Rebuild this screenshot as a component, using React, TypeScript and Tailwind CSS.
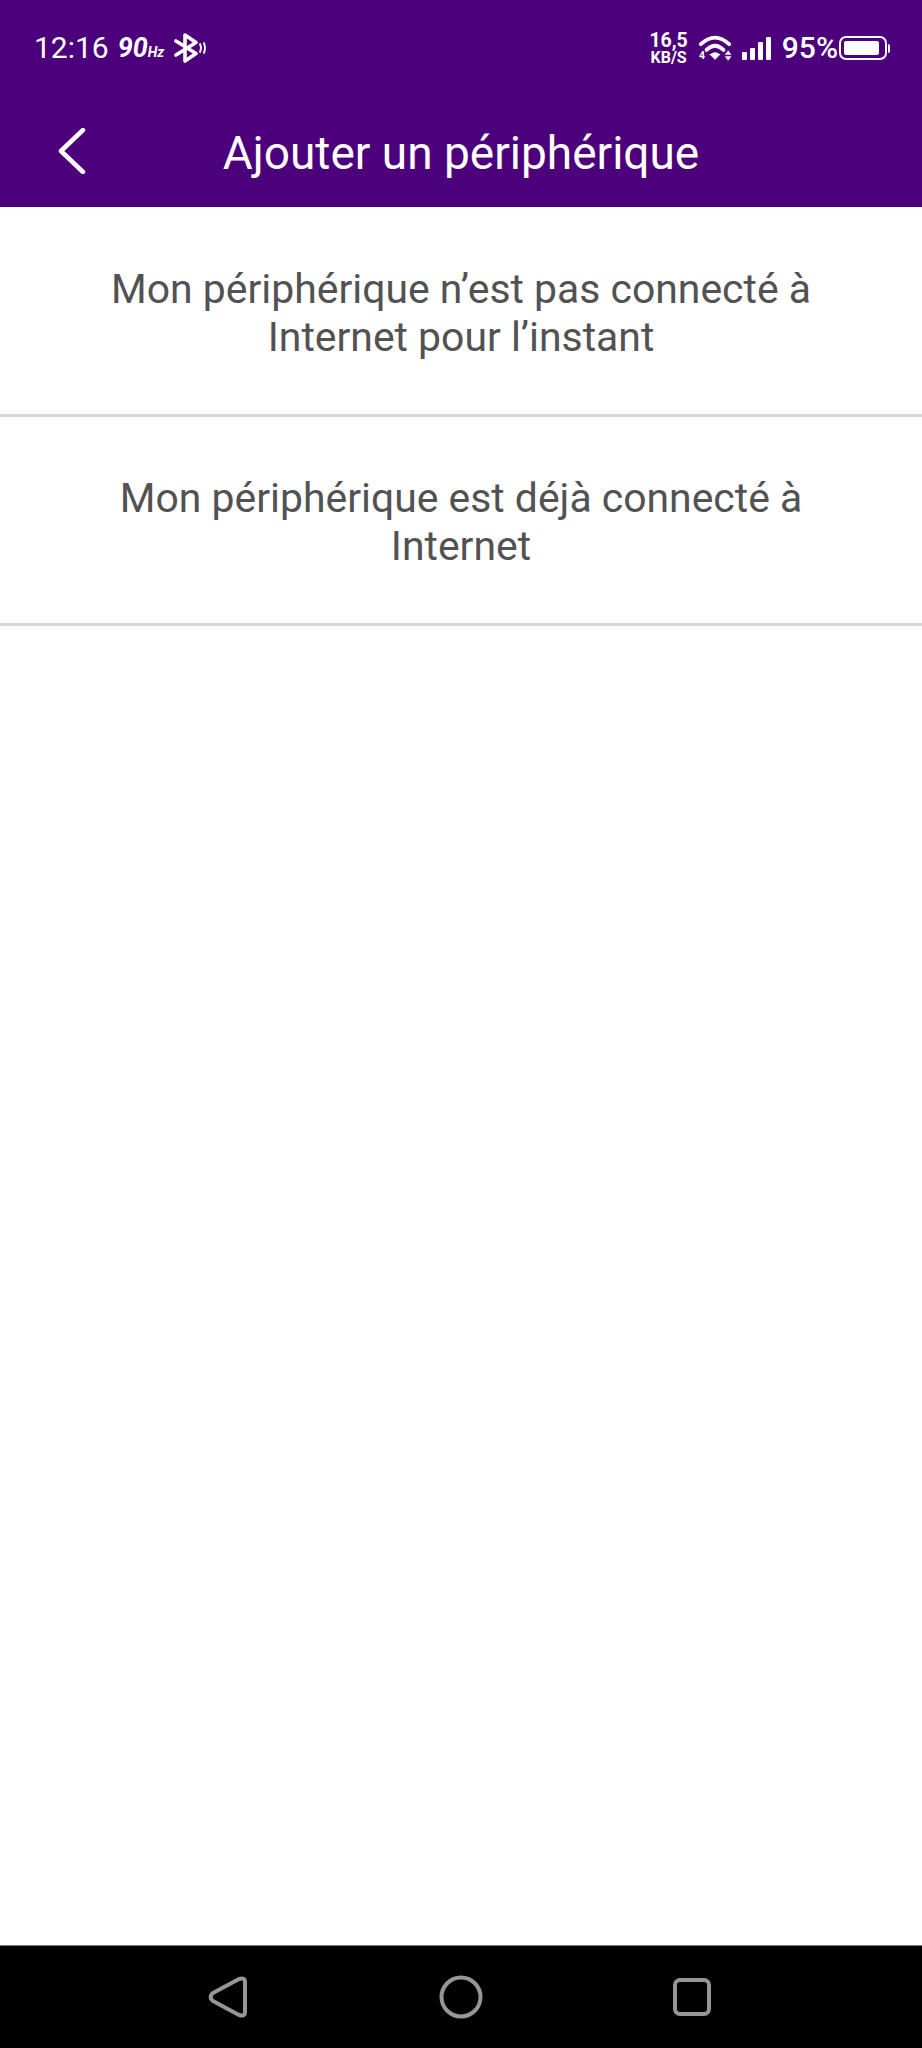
const options = [
  { top: 'Mon périphérique n’est pas connecté à', bottom: 'Internet pour l’instant' },
  { top: 'Mon périphérique est déjà connecté à', bottom: 'Internet' },
];

function StatusBar() {
  return (
    <div className="flex h-[96px] items-center justify-between pl-[34px] pr-[32px] text-white">
      <div className="flex items-center">
        <span className="text-[30px] leading-none">12:16</span>
        <span className="ml-[9px] flex items-baseline font-bold italic leading-none">
          <span className="text-[27px]">90</span>
          <span className="text-[14px]">Hz</span>
        </span>
        {/* bluetooth with audio */}
        <svg className="ml-[9px]" width="34" height="30" viewBox="0 0 34 30" fill="none" stroke="white" strokeLinecap="round" strokeLinejoin="round">
          <path d="M3 8 L23 20.5 L12 28 V2 L23 9.5 L3 22" strokeWidth="3.6" />
          <path d="M27 11 Q29 15 27 19" strokeWidth="1.8" />
          <path d="M31 10 Q33 15 31 20" strokeWidth="1.8" />
        </svg>
      </div>
      <div className="flex items-center">
        <div className="flex flex-col items-center font-bold leading-none">
          <span className="text-[19.5px] leading-[19px]">16,5</span>
          <span className="text-[16px] leading-[16px]">KB/S</span>
        </div>
        {/* wifi 4 */}
        <svg className="ml-[10px]" width="34" height="28" viewBox="0 0 36 28" fill="none" stroke="white" strokeLinecap="round">
          <path d="M3 10 Q18 -4 33 10" strokeWidth="4" />
          <path d="M9 16 Q18 7 27 16" strokeWidth="4" />
          <path d="M13 21 L18 26 L23 21 Q18 17 13 21Z" fill="white" strokeWidth="1" />
          <path d="M32 17 L35 21 H29Z M32 27 L35 23 H29Z" fill="white" strokeWidth="0.5" />
          <text x="1" y="26" fontSize="11" fontWeight="700" fill="white" stroke="none" fontFamily="Roboto, sans-serif">4</text>
        </svg>
        {/* signal */}
        <div className="ml-[10px] flex h-[23px] items-end gap-[3px]">
          <div className="h-[8px] w-[5px] rounded-[1px] bg-white" />
          <div className="h-[12px] w-[5px] rounded-[1px] bg-white" />
          <div className="h-[18px] w-[5px] rounded-[1px] bg-white" />
          <div className="h-[23px] w-[5px] rounded-[1px] bg-white" />
        </div>
        <span className="ml-[11px] text-[30px] font-medium leading-none">95%</span>
        {/* battery */}
        <div className="ml-[1px] flex items-center">
          <div className="flex h-[24px] w-[48px] items-center rounded-[7px] border-2 border-white p-[3px]">
            <div className="h-full w-[92%] rounded-[2px] bg-white" />
          </div>
          <div className="ml-[1px] h-[9px] w-[2px] rounded-r-[2px] bg-white" />
        </div>
      </div>
    </div>
  );
}

function NavBar() {
  return (
    <div className="relative flex h-[111px] items-center justify-center">
      <button className="absolute left-[58px] top-[32px] text-white">
        <svg width="28" height="46" viewBox="0 0 28 46" fill="none" stroke="white" strokeWidth="4.5" strokeLinecap="round" strokeLinejoin="round" className="block">
          <path d="M25 2 L3 23 L25 44" />
        </svg>
      </button>
      <h1 className="pt-[2px] text-[46px] font-normal leading-none text-white">Ajouter un périphérique</h1>
    </div>
  );
}

export default function App() {
  return (
    <div className="flex h-[2048px] w-[922px] flex-col bg-white font-['Roboto',sans-serif]">
      <div className="bg-[#4c007c]">
        <StatusBar />
        <NavBar />
      </div>

      <div className="flex-1 bg-white">
        {options.map((option) => (
          <div key={option.top} className="flex h-[209.5px] flex-col items-center justify-center border-b-[3px] border-[#d9d9d9] pt-[5px] text-center text-[40.9px] leading-[48px] text-[#525252]">
            <span>{option.top}</span>
            <span>{option.bottom}</span>
          </div>
        ))}
      </div>

      <div className="flex h-[103px] items-center justify-between border-t border-[#777] bg-black pl-[208px] pr-[211px]">
        <svg width="40" height="42" viewBox="0 0 40 42" fill="none" stroke="#969696" strokeWidth="4" strokeLinejoin="round">
          <path d="M3 21 Q2 19 5 17 L31 3 Q37 1 37 6 V36 Q37 41 31 39 L5 25 Q2 23 3 21Z" />
        </svg>
        <svg width="44" height="44" viewBox="0 0 44 44" fill="none" stroke="#969696" strokeWidth="4">
          <circle cx="22" cy="22" r="19.5" />
        </svg>
        <svg width="38" height="38" viewBox="0 0 38 38" fill="none" stroke="#969696" strokeWidth="4">
          <rect x="2" y="2" width="34" height="34" rx="5" />
        </svg>
      </div>
    </div>
  );
}
